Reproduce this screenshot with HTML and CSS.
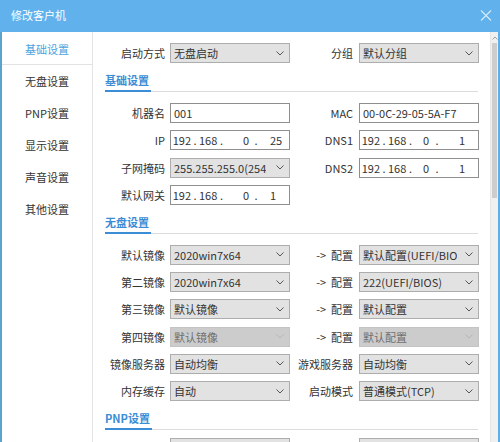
FILE: index.html
```html
<!DOCTYPE html>
<html lang="zh-CN">
<head>
<meta charset="utf-8">
<title>修改客户机</title>
<link rel="stylesheet" href="styles.css">
</head>
<body>
<div class="window">
  <div class="titlebar">
    <span class="title">修改客户机</span>
    <svg class="close" width="12" height="11" viewBox="0 0 12 11"><path d="M1 0.5 L11 10.5 M11 0.5 L1 10.5" stroke="#d4e9f9" stroke-width="1.2" fill="none"/></svg>
  </div>
  <div class="body">
    <nav class="sidebar">
      <div class="nav-item active">基础设置</div>
      <div class="nav-item">无盘设置</div>
      <div class="nav-item">PNP设置</div>
      <div class="nav-item">显示设置</div>
      <div class="nav-item">声音设置</div>
      <div class="nav-item">其他设置</div>
    </nav>
    <main class="content">
      <div class="grid">
        <label class="lbl">启动方式</label>
        <div class="select"><span>无盘启动</span><svg class="chev" width="8" height="5" viewBox="0 0 8 5"><path d="M0.5 0.5 L4 4 L7.5 0.5" stroke="#555" fill="none"/></svg></div>
        <label class="lbl lbl2">分组</label>
        <div class="select"><span>默认分组</span><svg class="chev" width="8" height="5" viewBox="0 0 8 5"><path d="M0.5 0.5 L4 4 L7.5 0.5" stroke="#555" fill="none"/></svg></div>
      </div>

      <div class="section"><span>基础设置</span></div>

      <div class="grid">
        <label class="lbl">机器名</label>
        <div class="input">001</div>
        <label class="lbl lbl2">MAC</label>
        <div class="input">00-0C-29-05-5A-F7</div>

        <label class="lbl">IP</label>
        <div class="input ip ip-a"><span class="o1">192</span><span class="d1">.</span><span class="o2">168</span><span class="d2">.</span><span class="o3">0</span><span class="d3">.</span><span class="o4">25</span></div>
        <label class="lbl lbl2">DNS1</label>
        <div class="input ip ip-b"><span class="o1">192</span><span class="d1">.</span><span class="o2">168</span><span class="d2">.</span><span class="o3">0</span><span class="d3">.</span><span class="o4">1</span></div>

        <label class="lbl">子网掩码</label>
        <div class="select"><span>255.255.255.0(254</span><svg class="chev" width="8" height="5" viewBox="0 0 8 5"><path d="M0.5 0.5 L4 4 L7.5 0.5" stroke="#555" fill="none"/></svg></div>
        <label class="lbl lbl2">DNS2</label>
        <div class="input ip ip-b"><span class="o1">192</span><span class="d1">.</span><span class="o2">168</span><span class="d2">.</span><span class="o3">0</span><span class="d3">.</span><span class="o4">1</span></div>

        <label class="lbl">默认网关</label>
        <div class="input ip ip-a"><span class="o1">192</span><span class="d1">.</span><span class="o2">168</span><span class="d2">.</span><span class="o3">0</span><span class="d3">.</span><span class="o4">1</span></div>
      </div>

      <div class="section"><span>无盘设置</span></div>

      <div class="grid">
        <label class="lbl">默认镜像</label>
        <div class="select"><span>2020win7x64</span><svg class="chev" width="8" height="5" viewBox="0 0 8 5"><path d="M0.5 0.5 L4 4 L7.5 0.5" stroke="#555" fill="none"/></svg></div>
        <label class="lbl lbl2 arrow">-&gt;  配置</label>
        <div class="select"><span>默认配置(UEFI/BIO</span><svg class="chev" width="8" height="5" viewBox="0 0 8 5"><path d="M0.5 0.5 L4 4 L7.5 0.5" stroke="#555" fill="none"/></svg></div>

        <label class="lbl">第二镜像</label>
        <div class="select"><span>2020win7x64</span><svg class="chev" width="8" height="5" viewBox="0 0 8 5"><path d="M0.5 0.5 L4 4 L7.5 0.5" stroke="#555" fill="none"/></svg></div>
        <label class="lbl lbl2 arrow">-&gt;  配置</label>
        <div class="select"><span>222(UEFI/BIOS)</span><svg class="chev" width="8" height="5" viewBox="0 0 8 5"><path d="M0.5 0.5 L4 4 L7.5 0.5" stroke="#555" fill="none"/></svg></div>

        <label class="lbl">第三镜像</label>
        <div class="select"><span>默认镜像</span><svg class="chev" width="8" height="5" viewBox="0 0 8 5"><path d="M0.5 0.5 L4 4 L7.5 0.5" stroke="#555" fill="none"/></svg></div>
        <label class="lbl lbl2 arrow">-&gt;  配置</label>
        <div class="select"><span>默认配置</span><svg class="chev" width="8" height="5" viewBox="0 0 8 5"><path d="M0.5 0.5 L4 4 L7.5 0.5" stroke="#555" fill="none"/></svg></div>

        <label class="lbl">第四镜像</label>
        <div class="select disabled"><span>默认镜像</span><svg class="chev" width="8" height="5" viewBox="0 0 8 5"><path d="M0.5 0.5 L4 4 L7.5 0.5" stroke="#b5b5b5" fill="none"/></svg></div>
        <label class="lbl lbl2 arrow">-&gt;  配置</label>
        <div class="select disabled"><span>默认配置</span><svg class="chev" width="8" height="5" viewBox="0 0 8 5"><path d="M0.5 0.5 L4 4 L7.5 0.5" stroke="#b5b5b5" fill="none"/></svg></div>

        <label class="lbl">镜像服务器</label>
        <div class="select"><span>自动均衡</span><svg class="chev" width="8" height="5" viewBox="0 0 8 5"><path d="M0.5 0.5 L4 4 L7.5 0.5" stroke="#555" fill="none"/></svg></div>
        <label class="lbl lbl2">游戏服务器</label>
        <div class="select"><span>自动均衡</span><svg class="chev" width="8" height="5" viewBox="0 0 8 5"><path d="M0.5 0.5 L4 4 L7.5 0.5" stroke="#555" fill="none"/></svg></div>

        <label class="lbl">内存缓存</label>
        <div class="select"><span>自动</span><svg class="chev" width="8" height="5" viewBox="0 0 8 5"><path d="M0.5 0.5 L4 4 L7.5 0.5" stroke="#555" fill="none"/></svg></div>
        <label class="lbl lbl2">启动模式</label>
        <div class="select"><span>普通模式(TCP)</span><svg class="chev" width="8" height="5" viewBox="0 0 8 5"><path d="M0.5 0.5 L4 4 L7.5 0.5" stroke="#555" fill="none"/></svg></div>
      </div>

      <div class="section section-short"><span>PNP设置</span></div>

      <div class="grid">
        <label class="lbl"></label>
        <div class="select"><span></span></div>
        <label class="lbl lbl2"></label>
        <div class="select"><span></span></div>
      </div>
    </main>
    <div class="scrollbar">
      <svg class="sb-arrow" width="6" height="4" viewBox="0 0 6 4"><path d="M0.5 3.5 L3 1 L5.5 3.5" stroke="#a0a0a0" fill="none"/></svg>
      <div class="thumb"></div>
    </div>
  </div>
</div>
</body>
</html>
```

FILE: styles.css
```css
* { box-sizing: border-box; }

html, body {
  margin: 0;
  padding: 0;
  background: #ffffff;
}

body {
  font-family: "Noto Sans CJK SC", "Noto Sans", sans-serif;
  font-size: 11px;
  color: #333333;
}

.window {
  width: 500px;
  height: 442px;
  overflow: hidden;
  display: flex;
  flex-direction: column;
  background: #ffffff;
}

.titlebar {
  height: 32px;
  flex: none;
  background: #60b1ec;
  display: flex;
  align-items: center;
  justify-content: space-between;
  padding: 0 8px 2px 11px;
}

.title {
  color: #ffffff;
  font-size: 11px;
  line-height: 16px;
}

.close {
  display: block;
  margin-top: 1px;
}

.body {
  flex: 1;
  display: flex;
  min-height: 0;
  border-left: 2px solid #5aa3cf;
  border-right: 2px solid #5eaee8;
}

.sidebar {
  width: 91px;
  flex: none;
  border-right: 1px solid #e4e4e4;
  padding-top: 1px;
}

.nav-item {
  height: 32px;
  line-height: 32px;
  padding-left: 23px;
  color: #333333;
}

.nav-item.active {
  color: #4ba3e0;
  border-bottom: 1px solid #e2e2e2;
}

.content {
  flex: 1;
  min-width: 0;
  overflow: hidden;
  padding-top: 11px;
}

.grid {
  display: grid;
  grid-template-columns: 77px 120px 69px 120px;
  grid-auto-rows: 20px;
  row-gap: 7.25px;
}

.lbl {
  text-align: right;
  padding-right: 5px;
  line-height: 20px;
  white-space: pre;
  color: #333333;
}

.lbl2 {
  padding-right: 6px;
}

.select {
  height: 20px;
  background: #e2e2e2;
  border: 1px solid #adadad;
  display: flex;
  align-items: center;
  justify-content: space-between;
  padding: 0 5px 0 3px;
  line-height: 18px;
  white-space: nowrap;
  overflow: hidden;
}

.select span {
  overflow: hidden;
}

.select.disabled {
  background: #cccccc;
  border-color: #c4c4c4;
  color: #6f6f6f;
}

.chev {
  flex: none;
  display: block;
}

.input {
  height: 20px;
  background: #ffffff;
  border: 1px solid #8f8f8f;
  padding: 0 3px;
  line-height: 18px;
  white-space: nowrap;
}

.ip {
  display: flex;
  padding: 0;
}

.ip span {
  display: block;
  flex: none;
}

.ip .o1 { width: 20px; text-align: right; }
.ip .d1 { width: 8px; text-align: center; }
.ip .o2 { width: 17px; text-align: left; }
.ip .d2 { width: 11px; text-align: center; }
.ip-a .o3 { width: 22px; text-align: right; }
.ip-a .d3 { width: 14px; text-align: center; }
.ip-a .o4 { padding-left: 7px; }
.ip-b .o3 { width: 13px; text-align: right; }
.ip-b .d3 { width: 16px; text-align: center; }
.ip-b .o4 { padding-left: 14px; }

.section {
  margin: 0 12px 11px 12px;
  padding-top: 8px;
  border-bottom: 1px solid #dcdcdc;
}

.section span {
  display: inline-block;
  line-height: 18px;
  padding: 0 2px 1px 0;
  margin-bottom: -1px;
  color: #3b8dd6;
  font-weight: bold;
  border-bottom: 2px solid #3b8dd6;
}

.section-short {
  margin-bottom: 8px;
}

.scrollbar {
  width: 8px;
  flex: none;
  background: #f0f0f0;
  border-left: 1px solid #e6e6e6;
  display: flex;
  flex-direction: column;
  align-items: center;
  padding-top: 4px;
}

.sb-arrow {
  display: block;
}

.thumb {
  margin-top: 3px;
  width: 5px;
  height: 155px;
  background: #cdcdcd;
}
```
